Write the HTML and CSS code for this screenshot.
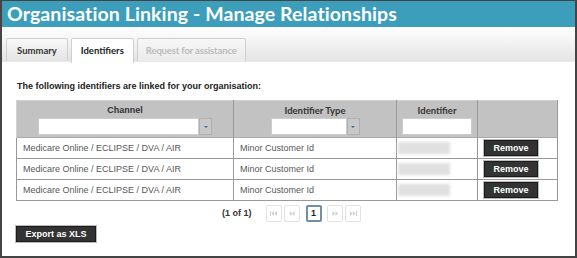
FILE: index.html
```html
<!DOCTYPE html>
<html lang="en">
<head>
    <meta charset="UTF-8">
    <meta name="viewport" content="width=device-width, initial-scale=1.0">
    <title>Organisation Linking - Manage Relationships</title>
    <link rel="stylesheet" href="styles.css">
</head>
<body>
    <div class="page">
        <h1 class="banner">Organisation Linking - Manage Relationships</h1>

        <div class="tabs">
            <div class="tab">Summary</div>
            <div class="tab tab-active">Identifiers</div>
            <div class="tab tab-disabled">Request for assistance</div>
        </div>

        <div class="content">
            <p class="intro">The following identifiers are linked for your organisation:</p>

            <table class="grid">
                <thead>
                    <tr>
                        <th class="col-channel">
                            <div class="th-label arial">Channel</div>
                            <div class="filter">
                                <span class="filter-input w-channel"></span>
                                <span class="filter-btn"><span class="caret"></span></span>
                            </div>
                        </th>
                        <th class="col-type">
                            <div class="th-label">Identifier Type</div>
                            <div class="filter">
                                <span class="filter-input w-type"></span>
                                <span class="filter-btn"><span class="caret"></span></span>
                            </div>
                        </th>
                        <th class="col-id">
                            <div class="th-label">Identifier</div>
                            <div class="filter">
                                <span class="filter-input w-id"></span>
                            </div>
                        </th>
                        <th class="col-action"></th>
                    </tr>
                </thead>
                <tbody>
                    <tr>
                        <td>Medicare Online / ECLIPSE / DVA / AIR</td>
                        <td>Minor Customer Id</td>
                        <td><span class="masked"></span></td>
                        <td><button class="btn-dark">Remove</button></td>
                    </tr>
                    <tr>
                        <td>Medicare Online / ECLIPSE / DVA / AIR</td>
                        <td>Minor Customer Id</td>
                        <td><span class="masked"></span></td>
                        <td><button class="btn-dark">Remove</button></td>
                    </tr>
                    <tr>
                        <td>Medicare Online / ECLIPSE / DVA / AIR</td>
                        <td>Minor Customer Id</td>
                        <td><span class="masked"></span></td>
                        <td><button class="btn-dark">Remove</button></td>
                    </tr>
                </tbody>
            </table>

            <div class="paginator">
                <span class="page-count">(1 of 1)</span>
                <span class="pg-btn">
                    <svg width="8" height="5" viewBox="0 0 8 5"><rect x="0" y="0" width="1" height="5"/><polygon points="4,0 1.5,2.5 4,5"/><polygon points="7,0 4.5,2.5 7,5"/></svg>
                </span>
                <span class="pg-btn">
                    <svg width="8" height="5" viewBox="0 0 8 5"><polygon points="3.5,0 1,2.5 3.5,5"/><polygon points="6.5,0 4,2.5 6.5,5"/></svg>
                </span>
                <span class="pg-btn pg-current">1</span>
                <span class="pg-btn">
                    <svg width="8" height="5" viewBox="0 0 8 5"><polygon points="1.5,0 4,2.5 1.5,5"/><polygon points="4.5,0 7,2.5 4.5,5"/></svg>
                </span>
                <span class="pg-btn">
                    <svg width="8" height="5" viewBox="0 0 8 5"><polygon points="1,0 3.5,2.5 1,5"/><polygon points="4,0 6.5,2.5 4,5"/><rect x="7" y="0" width="1" height="5"/></svg>
                </span>
            </div>

            <button class="btn-dark btn-export">Export as XLS</button>
        </div>
    </div>
</body>
</html>
```

FILE: styles.css
```css
html, body {
    margin: 0;
    padding: 0;
    background: white;
}
.page {
    width: 577px;
    height: 258px;
    box-sizing: border-box;
    border: 2px solid #444;
    border-top-width: 1px;
    background: white;
    font-family: "Liberation Sans", Arial, sans-serif;
}
.banner {
    margin: 0;
    height: 26px;
    padding-left: 5px;
    background-color: #3c9eba;
    color: white;
    font-family: Lato, "Open Sans", sans-serif;
    font-weight: bold;
    font-size: 19.5px;
    line-height: 25px;
    letter-spacing: 0.1px;
}
.tabs {
    display: flex;
    gap: 3px;
    height: 35px;
    box-sizing: border-box;
    padding: 11px 0 0 4px;
    background: linear-gradient(#ffffff, #e4e4e4);
    border-bottom: 1px solid #e8e8e8;
}
.tab {
    padding: 0 10px;
    line-height: 23px;
    border: 1px solid #cfcfcf;
    border-bottom: none;
    border-radius: 2px 2px 0 0;
    background: linear-gradient(#f8f8f8, #e4e4e4);
    color: #333;
    font-family: Lato, "Open Sans", sans-serif;
    font-weight: bold;
    font-size: 9.5px;
}
.tab-active {
    background: white;
    color: #222;
    height: 24px;
    padding: 0 9px;
}
.tab-disabled {
    padding: 0 8px;
    letter-spacing: -0.15px;
    color: #bbb;
    background: linear-gradient(#f6f6f6, #ebebeb);
}
.content {
    padding: 0 0 0 14px;
}
.intro {
    margin: 0;
    padding: 18px 0 0 1px;
    height: 20px;
    font-weight: bold;
    font-size: 9px;
    line-height: 12px;
    color: #222;
}
.grid {
    width: 542px;
    border-collapse: collapse;
    font-size: 9px;
    color: #585858;
}
.grid th {
    background: #c2c2c2;
    border-top: 1px solid #d0d0d0;
    border-left: 1px solid #999;
    border-right: 1px solid #999;
    padding: 3px 0 2px;
    height: 31px;
    vertical-align: top;
    font-weight: bold;
}
.grid th:first-child {
    border-left: 1px solid #d0d0d0;
}
.col-channel { width: 216px; }
.col-type { width: 162px; }
.col-id { width: 80px; }
.th-label {
    font-family: Lato, "Open Sans", sans-serif;
    font-size: 9.5px;
    line-height: 13px;
    color: #333;
}
.th-label.arial {
    font-family: "Liberation Sans", Arial, sans-serif;
    font-size: 9px;
}
.filter {
    display: flex;
    justify-content: center;
    margin-top: 1px;
}
.filter-input {
    display: block;
    height: 17px;
    background: white;
    border: 1px solid #ccc;
    box-sizing: border-box;
}
.w-channel { width: 161px; }
.w-type { width: 76px; }
.w-id { width: 70px; }
.filter-btn {
    display: flex;
    align-items: center;
    justify-content: center;
    width: 13px;
    height: 17px;
    box-sizing: border-box;
    border: 1px solid #b0b0b0;
    background: #c8c8c8;
}
.caret {
    width: 0;
    height: 0;
    border-left: 2px solid transparent;
    border-right: 2px solid transparent;
    border-top: 2px solid #3b6f94;
}
.grid td {
    border: 1px solid #999;
    border-top-color: #aaa;
    height: 21px;
    padding: 0 6px;
    box-sizing: border-box;
    line-height: 12px;
    white-space: nowrap;
}
.masked {
    display: block;
    width: 52px;
    height: 12px;
    margin-left: -5px;
    background: #e0e0e0;
    filter: blur(1.5px);
}
.btn-dark {
    display: block;
    padding: 0;
    width: 54px;
    height: 16px;
    background: #333;
    border: 1px solid #1a1a1a;
    box-shadow: 0 0 0 1px #bbb;
    color: white;
    font-family: "Liberation Sans", Arial, sans-serif;
    font-weight: bold;
    font-size: 9px;
    line-height: 13px;
}
.paginator {
    display: flex;
    align-items: center;
    height: 20px;
    padding-left: 206px;
    padding-top: 2px;
}
.page-count {
    font-weight: bold;
    font-size: 9px;
    color: #333;
    margin-right: 14px;
}
.pg-btn {
    display: flex;
    align-items: center;
    justify-content: center;
    width: 16px;
    height: 17px;
    box-sizing: border-box;
    margin-right: 2px;
    border: 1px solid #e2e2e2;
    border-radius: 2px;
    fill: #cfcfcf;
}
.pg-current {
    margin: 0 5px 0 4px;
    border: 2px solid #6f8fa6;
    font-weight: bold;
    font-size: 9px;
    color: #222;
}
.btn-export {
    width: 80px;
    margin-top: 3px;
}
```
